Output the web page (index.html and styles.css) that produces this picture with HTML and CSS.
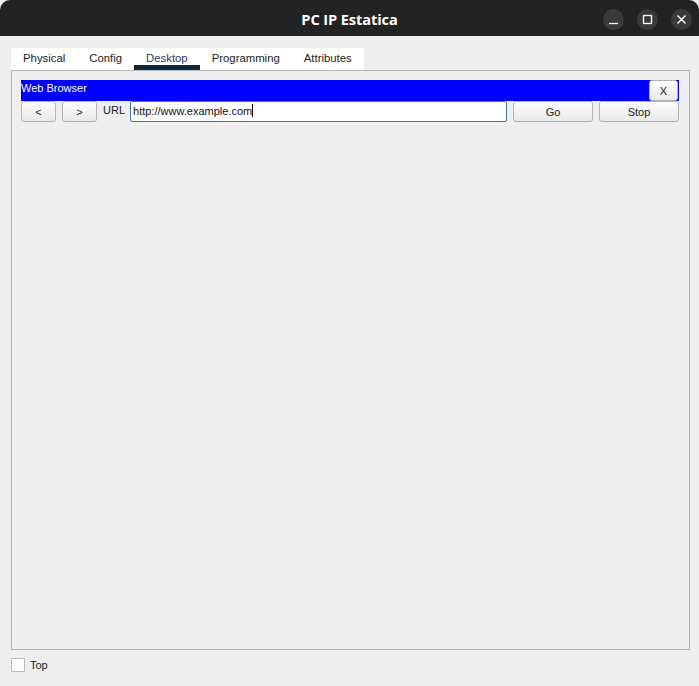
FILE: index.html
```html
<!DOCTYPE html>
<html>
<head>
<meta charset="utf-8">
<link rel="stylesheet" href="styles.css">
</head>
<body>
<div class="window">
  <div class="titlebar">
    <div class="spacer"></div>
    <div class="title">PC IP Estatica</div>
    <div class="controls">
      <span class="ctl"><svg width="21" height="21" viewBox="0 0 21 21"><line x1="6" y1="14.5" x2="15" y2="14.5" stroke="#fff" stroke-width="1.3"/></svg></span>
      <span class="ctl"><svg width="21" height="21" viewBox="0 0 21 21"><rect x="6.5" y="6.5" width="8" height="8" fill="none" stroke="#fff" stroke-width="1.3"/></svg></span>
      <span class="ctl"><svg width="21" height="21" viewBox="0 0 21 21"><path d="M6.5 6.5 L14.5 14.5 M14.5 6.5 L6.5 14.5" stroke="#fff" stroke-width="1.4"/></svg></span>
    </div>
  </div>
  <div class="main">
    <div class="tabs">
      <div class="tab">Physical</div>
      <div class="tab">Config</div>
      <div class="tab active">Desktop</div>
      <div class="tab">Programming</div>
      <div class="tab">Attributes</div>
    </div>
    <div class="panel">
      <div class="appbar">
        <span class="apptitle">Web Browser</span>
        <button class="btn close">X</button>
      </div>
      <div class="toolbar">
        <button class="btn nav">&lt;</button>
        <button class="btn nav">&gt;</button>
        <span class="urllabel">URL</span>
        <div class="url">http://www.example.com<span class="caret"></span></div>
        <button class="btn go">Go</button>
        <button class="btn go">Stop</button>
      </div>
    </div>
    <label class="topcheck"><span class="box"></span><span>Top</span></label>
  </div>
</div>
</body>
</html>
```
FILE: styles.css
```css
* { box-sizing: border-box; }
html, body { margin: 0; padding: 0; background: #eeeeee; }
body {
  font-family: "Liberation Sans", Arial, sans-serif;
  font-size: 11px;
  color: #222;
}
.window {
  width: 699px;
  height: 686px;
  background: #eeeeee;
}
.titlebar {
  height: 36px;
  background: #222222;
  border-radius: 10px 10px 0 0;
  display: grid;
  grid-template-columns: 1fr auto 1fr;
  align-items: center;
}
.title {
  color: #ffffff;
  font-family: "Open Sans", "DejaVu Sans", sans-serif;
  font-weight: 700;
  font-size: 14.6px;
  letter-spacing: -0.1px;
  padding-top: 1px;
}
.controls {
  display: flex;
  justify-content: flex-end;
  gap: 13px;
  padding-right: 7px;
  padding-top: 2px;
}
.ctl {
  width: 21px;
  height: 21px;
  border-radius: 50%;
  background: #3a3a3a;
  display: block;
}
.ctl svg { display: block; }
.main {
  padding: 12px 9px 0 11px;
}
.tabs {
  display: inline-flex;
  background: #ffffff;
  height: 22px;
  vertical-align: top;
}
.tab {
  padding: 0 12px;
  font-size: 11.35px;
  line-height: 21px;
  color: #222;
  border-bottom: 5px solid transparent;
  height: 22px;
}
.tab.active {
  color: #1f3a64;
  border-bottom-color: #0f2442;
}
.panel {
  border: 1px solid #b4b4b4;
  height: 580px;
  padding: 9px 10px 0 9px;
  background: #eeeeee;
}
.appbar {
  background: #0000ff;
  height: 21px;
  display: flex;
  justify-content: space-between;
  align-items: flex-start;
  padding-right: 1px;
}
.apptitle {
  color: #ffffff;
  line-height: 17px;
}
.btn {
  font-family: "Liberation Sans", Arial, sans-serif;
  font-size: 11px;
  color: #222;
  background: linear-gradient(#fdfdfd, #e9e9e9);
  border: 1px solid #b3b3b3;
  border-radius: 3px;
  padding: 0;
  margin: 0;
  height: 21px;
}
.close {
  width: 29px;
  height: 21px;
}
.toolbar {
  display: flex;
  align-items: center;
  gap: 6px;
  height: 21px;
  padding-right: 0;
}
.nav { width: 35px; }
.urllabel { margin-right: -1px; margin-top: -3px; }
.url {
  flex: 1;
  height: 21px;
  background: #ffffff;
  border: 1px solid #3a78a8;
  border-radius: 2px;
  padding: 0 2px;
  line-height: 18px;
  color: #111;
  white-space: nowrap;
}
.caret {
  display: inline-block;
  width: 1px;
  height: 13px;
  background: #000;
  vertical-align: -2px;
}
.go { width: 80px; }
.topcheck {
  display: flex;
  align-items: center;
  gap: 5px;
  margin-top: 8px;
}
.box {
  width: 14px;
  height: 14px;
  border: 1px solid #b8b8b8;
  background: #ffffff;
  border-radius: 1px;
}
```
